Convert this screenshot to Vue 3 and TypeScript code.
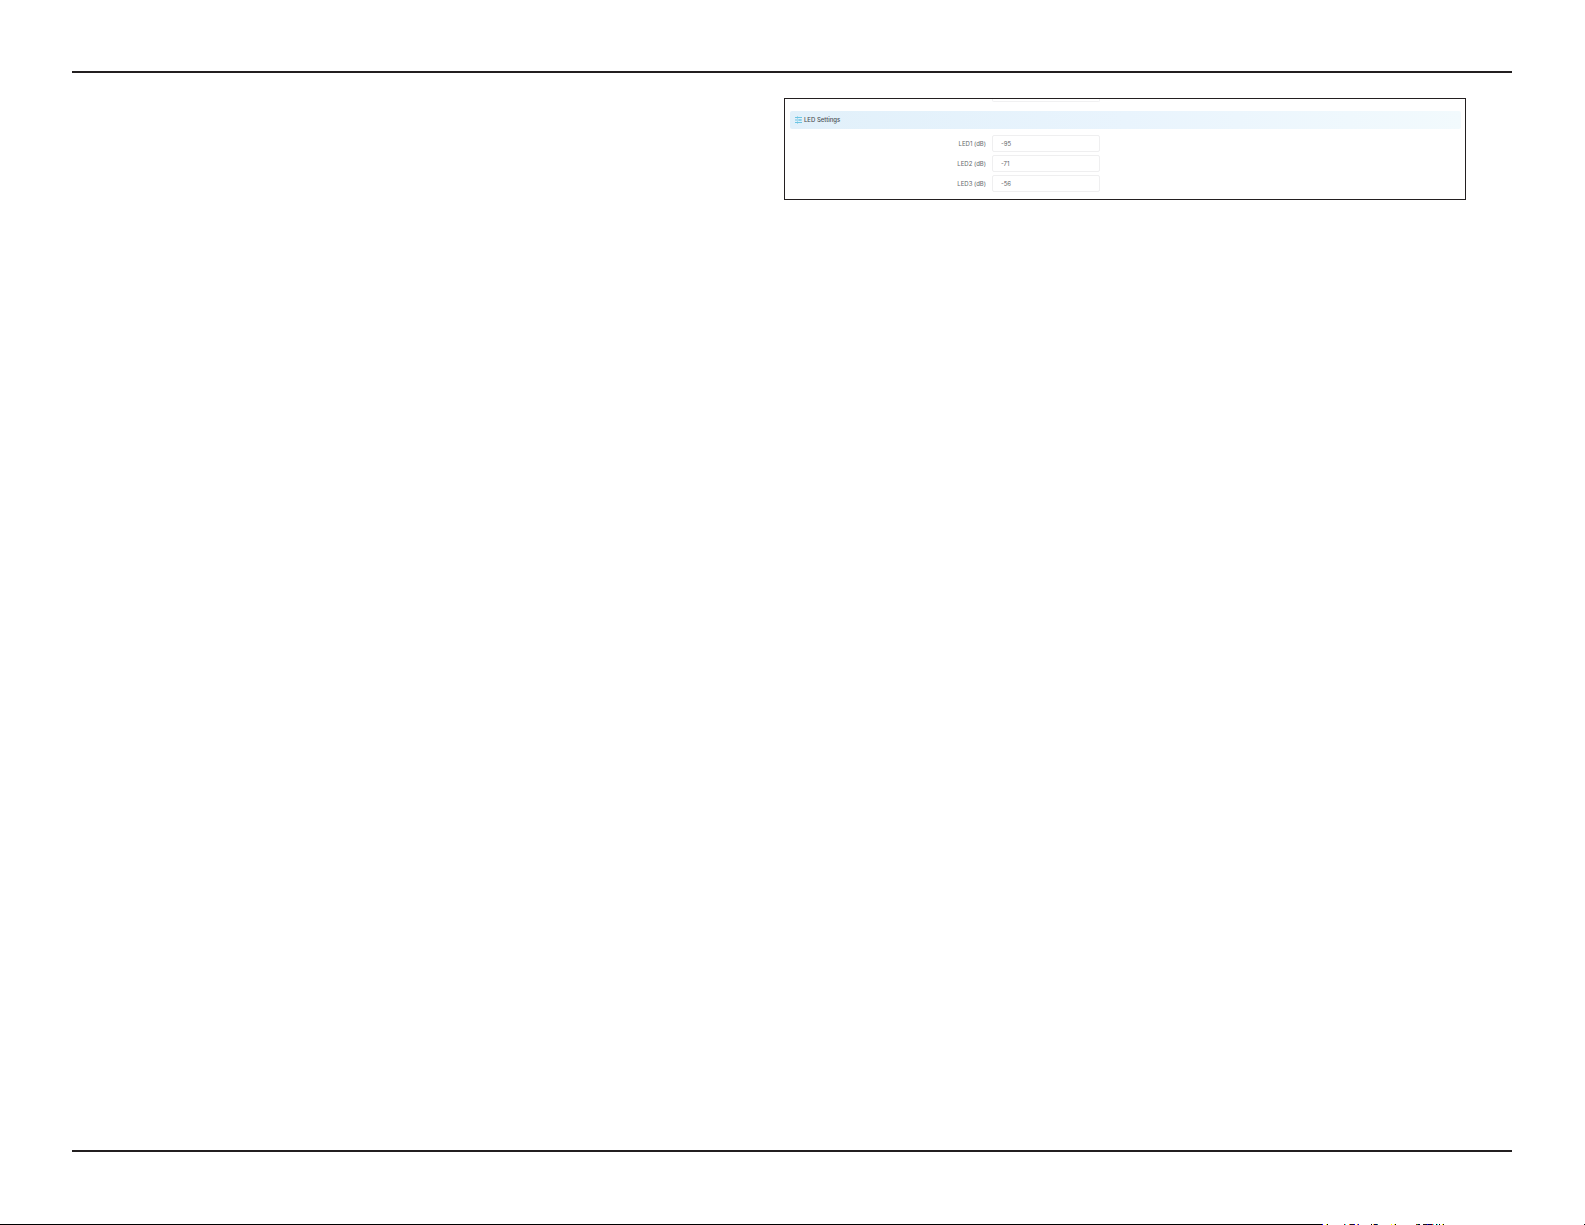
<script setup lang="ts">
import { ref } from 'vue'

interface LedField {
  id: string
  label: string
  value: string
}

const fields = ref<LedField[]>([
  { id: 'led1', label: 'LED1 (dB)', value: '-95' },
  { id: 'led2', label: 'LED2 (dB)', value: '-71' },
  { id: 'led3', label: 'LED3 (dB)', value: '-56' },
])

// Marks along the bottom edge: start, width, colour
const marks: [number, number, string][] = [
  [0, 1, '#0000ff'], [4, 1, '#ffff00'], [5, 1, '#000000'],
  [22, 1, '#b00000'], [23, 1, '#00ffff'],
  [27, 1, '#ff8000'], [28, 4, '#201020'], [32, 1, '#0000ff'],
  [35, 1, '#ff8000'], [36, 1, '#0000ff'],
  [49, 1, '#000000'], [51, 1, '#ffb000'], [52, 3, '#000040'], [55, 1, '#008080'],
  [69, 1, '#ffff00'], [72, 1, '#ffff00'], [73, 1, '#000000'],
  [94, 1, '#b00000'], [95, 1, '#00a000'], [96, 2, '#000040'],
  [101, 4, '#201010'], [105, 1, '#0000ff'], [106, 4, '#000040'], [110, 1, '#ff0000'], [111, 1, '#00ffff'],
  [114, 1, '#000000'], [115, 1, '#00ffff'], [117, 1, '#000000'],
  [120, 1, '#ffff00'], [121, 1, '#000000'],
]
</script>

<template>
  <div class="page">
    <main class="sheet">
      <section class="card" aria-labelledby="led-title">
        <div class="previous"></div>
        <header class="bar">
          <svg class="icon" viewBox="0 0 14 16" aria-hidden="true">
            <path d="M0 3h14M0 8h14M0 13h14" />
            <path d="M5 1v4M10 6v4M5 11v4" />
          </svg>
          <h1 id="led-title" class="title">LED Settings</h1>
        </header>
        <form class="form" @submit.prevent>
          <div v-for="field in fields" :key="field.id" class="row">
            <label class="label" :for="field.id">{{ field.label }}</label>
            <input :id="field.id" v-model="field.value" class="input" type="text" />
          </div>
        </form>
      </section>
    </main>
    <footer class="edge">
      <span class="line"></span>
      <svg class="marks" viewBox="0 0 122 1" shape-rendering="crispEdges" aria-hidden="true">
        <rect v-for="m in marks" :key="m[0]" :x="m[0]" y="0" :width="m[1]" height="1" :fill="m[2]" />
      </svg>
      <span class="rest"></span>
      <span class="dot"></span>
    </footer>
  </div>
</template>

<style>
body {
  margin: 0;
  background: #fff;
}
</style>

<style scoped>
.page {
  display: flex;
  flex-direction: column;
  box-sizing: border-box;
  min-height: 100vh;
  padding-top: 71px;
  font-family: Inter, "Liberation Sans", sans-serif;
}
.sheet {
  flex: 1;
  box-sizing: border-box;
  margin: 0 73px 72px 72px;
  padding: 25px 46px 0 0;
  border-top: 2px solid #231f20;
  border-bottom: 2px solid #231f20;
}
.card {
  box-sizing: border-box;
  width: calc(49% - 1px);
  margin-left: auto;
  padding: 0 4px 7px 5px;
  border: 1px solid #231f20;
}
.previous {
  box-sizing: border-box;
  width: 108px;
  height: 3px;
  margin-left: 202px;
  border: 1px solid #f1f1f2;
  border-top: 0;
  border-radius: 0 0 2px 2px;
}
.bar {
  display: flex;
  align-items: center;
  gap: 2px;
  height: 18px;
  margin-top: 9px;
  padding-left: 5px;
  border-radius: 2px;
  background: linear-gradient(90deg, #e1f0fa, #e9f4fd 50%, #f2fafd);
}
.icon {
  width: 7px;
  height: 8px;
  fill: none;
  stroke: #6dc5e3;
  stroke-width: 2;
}
.title {
  margin: 0;
  color: #4b5054;
  font-size: 6px;
  font-weight: 500;
  line-height: 8px;
}
.form {
  display: flex;
  flex-direction: column;
  gap: 3px;
  margin-top: 6px;
}
.row {
  display: flex;
  align-items: center;
  gap: 6px;
}
.label {
  width: 196px;
  color: #66696c;
  font-size: 6px;
  line-height: 8px;
  text-align: right;
}
.input {
  box-sizing: border-box;
  width: 108px;
  height: 17px;
  padding: 0 8px;
  border: 1px solid #efeff0;
  border-radius: 2px;
  outline: 0;
  background: #fff;
  color: #626568;
  font: 6px/8px Inter, "Liberation Sans", sans-serif;
}
.edge {
  display: flex;
  height: 1px;
}
.line {
  flex: 1;
  background: #000;
}
.marks {
  width: 122px;
  height: 1px;
}
.rest {
  width: 140px;
}
.dot {
  width: 1px;
  background: #000;
}
</style>
